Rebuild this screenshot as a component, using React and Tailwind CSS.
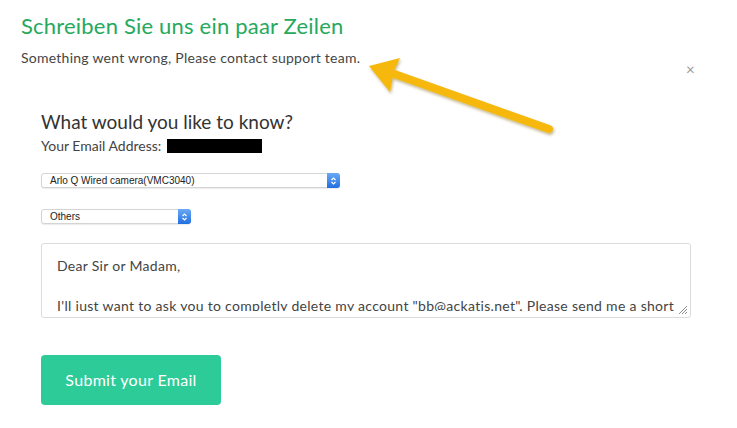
export default function App() {
  return (
    <div className="relative w-[737px] h-[428px] bg-white overflow-hidden font-['Lato',sans-serif]">
      {/* header */}
      <div className="pl-[21px] pt-[12px]">
        <h1 className="text-[22px] leading-[28px] text-[#26a95c] tracking-[0.2px]">Schreiben Sie uns ein paar Zeilen</h1>
        <p className="mt-[9px] text-[14px] leading-[18px] text-[#454545] tracking-[0.25px]">Something went wrong, Please contact support team.</p>
      </div>

      <button className="absolute left-[686px] top-[62px] text-[15px] leading-none text-[#9a9a9a]">×</button>

      {/* form */}
      <div className="pl-[41px] pr-[46px] pt-[44px]">
        <h2 className="text-[19px] leading-[22px] text-[#333]">What would you like to know?</h2>
        <div className="mt-[4px] flex items-center text-[14px] leading-[18px] text-[#444]">
          <span>Your Email Address:</span>
          <span className="ml-[6px] inline-block w-[95px] h-[14px] bg-black" />
        </div>

        <Select label="Arlo Q Wired camera(VMC3040)" width="w-[299px]" className="mt-[18px]" />
        <Select label="Others" width="w-[150px]" className="mt-[21px]" />

        <div className="relative mt-[19px] h-[75px] rounded-[3px] border border-[#dcdcdc]">
          <div className="h-[67px] overflow-hidden pl-[15px] pt-[12px] text-[14px] leading-[20px] text-[#444] tracking-[0.3px]">
            <p>Dear Sir or Madam,</p>
            <p className="mt-[20px] whitespace-nowrap">I'll just want to ask you to completly delete my account "bb@ackatis.net". Please send me a short</p>
          </div>
          <svg className="absolute right-[2px] bottom-[2px]" width="12" height="12" viewBox="0 0 12 12">
            <path d="M11 3 L3 11 M11 6 L6 11 M11 9 L9 11" stroke="#8a8a8a" strokeWidth="1" />
          </svg>
        </div>

        <button className="mt-[37px] w-[180px] h-[50px] rounded-[4px] bg-[#2ccb98] text-white text-[16px] tracking-[0.3px]">Submit your Email</button>
      </div>

      {/* arrow annotation */}
      <svg className="absolute left-[360px] top-[50px]" width="210" height="100" viewBox="0 0 210 100">
        <defs>
          <filter id="sh" x="-20%" y="-40%" width="140%" height="180%">
            <feDropShadow dx="1" dy="2" stdDeviation="1.5" floodColor="#7a5a00" floodOpacity="0.45" />
          </filter>
        </defs>
        <g filter="url(#sh)">
          <line x1="189" y1="79" x2="26" y2="21" stroke="#f6b80f" strokeWidth="8" strokeLinecap="round" />
          <path d="M9 16 L40 8 L34 20 L30 42 Z" fill="#f6b80f" />
        </g>
      </svg>
    </div>
  )
}

function Select({ label, width, className }) {
  return (
    <div className={`${className} ${width} h-[15px] flex items-stretch rounded-[3px] border border-[#d4d4d4] bg-white shadow-[0_1px_1px_rgba(0,0,0,0.08)]`}>
      <span className="flex-1 pl-[8px] text-[10px] leading-[13px] text-[#222] font-['Liberation_Sans',sans-serif]">{label}</span>
      <span className="w-[13px] -my-px -mr-px rounded-r-[3px] bg-gradient-to-b from-[#6aa9f5] to-[#1f6fe0] flex items-center justify-center">
        <svg width="7" height="10" viewBox="0 0 7 10">
          <path d="M1.5 4 L3.5 2 L5.5 4 M1.5 6 L3.5 8 L5.5 6" stroke="white" strokeWidth="1.2" fill="none" />
        </svg>
      </span>
    </div>
  )
}
